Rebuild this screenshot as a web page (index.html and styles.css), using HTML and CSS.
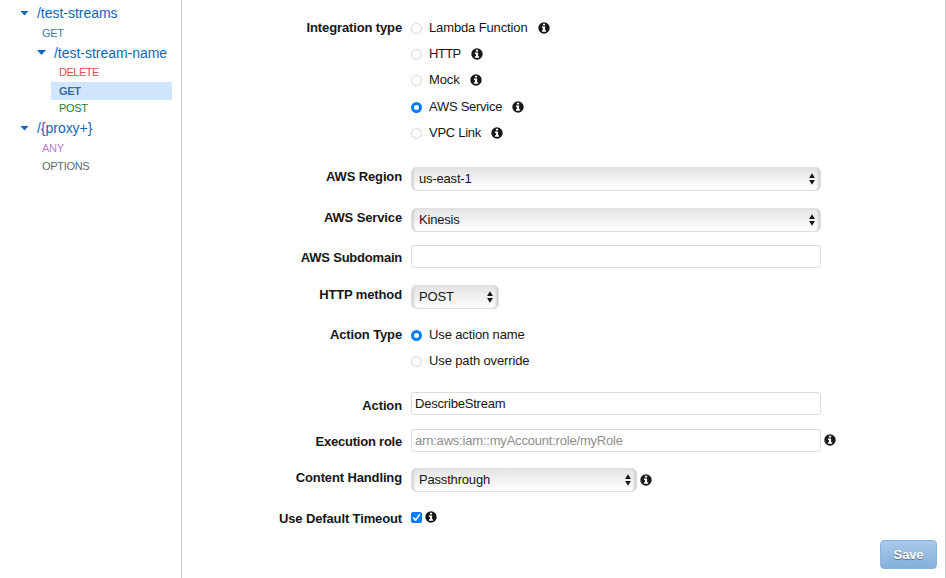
FILE: index.html
```
<!DOCTYPE html>
<html lang="en">
<head>
<meta charset="utf-8">
<title>Integration Request</title>
<link rel="stylesheet" href="styles.css">
</head>
<body>
<svg class="defs" width="0" height="0" aria-hidden="true">
  <symbol id="info" viewBox="0 0 12 12">
    <circle cx="6" cy="6" r="5.7" fill="#161616"/>
    <path d="M4.9 1.7h2.2v1.8H4.9zM3.9 4.6h3.2v3.7h1v1.4H3.9V8.3h1V6h-1z" fill="#fff"/>
  </symbol>
  <symbol id="updown" viewBox="0 0 6 12">
    <path d="M3 .2 5.9 5H.1zM3 11.8.1 7h5.8z" fill="#161616"/>
  </symbol>
</svg>
<div class="page">
  <nav class="sidebar">
    <div class="resource"><i class="caret"></i>/test-streams</div>
    <div class="method get">GET</div>
    <div class="resource nested"><i class="caret"></i>/test-stream-name</div>
    <div class="method deep delete">DELETE</div>
    <div class="method deep get selected">GET</div>
    <div class="method deep post">POST</div>
    <div class="resource"><i class="caret"></i>/{proxy+}</div>
    <div class="method any">ANY</div>
    <div class="method options">OPTIONS</div>
  </nav>
  <main class="content">
    <form class="form">
      <div class="row row-type">
        <span class="label">Integration type</span>
        <div class="choices">
          <label class="choice"><input type="radio" name="type"><span>Lambda Function</span><svg class="info"><use href="#info"/></svg></label>
          <label class="choice"><input type="radio" name="type"><span class="tight">HTTP</span><svg class="info"><use href="#info"/></svg></label>
          <label class="choice"><input type="radio" name="type"><span>Mock</span><svg class="info"><use href="#info"/></svg></label>
          <label class="choice"><input type="radio" name="type" checked><span class="snug">AWS Service</span><svg class="info"><use href="#info"/></svg></label>
          <label class="choice"><input type="radio" name="type"><span class="snug">VPC Link</span><svg class="info"><use href="#info"/></svg></label>
        </div>
      </div>
      <div class="row row-region">
        <span class="label">AWS Region</span>
        <div class="select wide"><span>us-east-1</span><svg class="updown"><use href="#updown"/></svg></div>
      </div>
      <div class="row row-service">
        <span class="label">AWS Service</span>
        <div class="select wide"><span>Kinesis</span><svg class="updown"><use href="#updown"/></svg></div>
      </div>
      <div class="row row-subdomain">
        <span class="label low">AWS Subdomain</span>
        <input class="text" type="text">
      </div>
      <div class="row row-method">
        <span class="label">HTTP method</span>
        <div class="select small"><span>POST</span><svg class="updown"><use href="#updown"/></svg></div>
      </div>
      <div class="row row-action-type">
        <span class="label">Action Type</span>
        <div class="choices">
          <label class="choice"><input type="radio" name="action" checked><span>Use action name</span></label>
          <label class="choice"><input type="radio" name="action"><span>Use path override</span></label>
        </div>
      </div>
      <div class="row row-action">
        <span class="label low">Action</span>
        <input class="text" type="text" value="DescribeStream">
      </div>
      <div class="row row-role">
        <span class="label low">Execution role</span>
        <div class="with-info"><input class="text" type="text" placeholder="arn:aws:iam::myAccount:role/myRole"><svg class="info"><use href="#info"/></svg></div>
      </div>
      <div class="row row-handling">
        <span class="label">Content Handling</span>
        <div class="with-info"><div class="select medium"><span>Passthrough</span><svg class="updown"><use href="#updown"/></svg></div><svg class="info"><use href="#info"/></svg></div>
      </div>
      <div class="row row-timeout">
        <span class="label">Use Default Timeout</span>
        <div class="check"><span class="box"><svg viewBox="0 0 11 11"><path d="M2.5 5.8 4.6 8.1 8.5 2.6" fill="none" stroke="#fff" stroke-width="1.6" stroke-linecap="round" stroke-linejoin="round"/></svg></span><svg class="info"><use href="#info"/></svg></div>
      </div>
    </form>
    <button class="save" type="button">Save</button>
  </main>
</div>
</body>
</html>
```
FILE: styles.css
```
* { box-sizing: border-box; }
body {
  margin: 0;
  background: #fff;
  color: #161616;
  font-family: "Liberation Sans", Arial, sans-serif;
  font-size: 13px;
}
.defs { display: none; }
.page { display: flex; width: 946px; height: 578px; overflow: hidden; }

.sidebar {
  width: 182px;
  flex: none;
  padding-top: 2px;
  border-right: 1px solid #ccc;
}
.resource {
  display: flex;
  align-items: center;
  height: 22px;
  padding-left: 20px;
  color: #1166bb;
  font-size: 14px;
  letter-spacing: -0.03px;
  white-space: nowrap;
}
.resource.nested { height: 21px; padding-left: 37px; }
.caret {
  width: 9px;
  height: 5px;
  margin-right: 8px;
  background: #1166bb;
  clip-path: polygon(0 0, 100% 0, 50% 100%);
}
.method {
  height: 18px;
  margin-left: 34px;
  padding-left: 8px;
  font-size: 11px;
  letter-spacing: -0.3px;
  line-height: 18px;
}
.deep { margin-left: 51px; }
.get { color: #4477aa; }
.delete { height: 19px; line-height: 19px; letter-spacing: -0.5px; color: #dd4f50; }
.selected { width: 121px; background: #d0e6ff; color: #3d6c9f; font-weight: bold; }
.post { height: 17px; line-height: 17px; color: #22812b; }
.any { color: #c07fd8; }
.options { color: #666; }

.content {
  display: flex;
  flex-direction: column;
  flex: 1;
  border-right: 1px solid #c8c8c8;
}
.form { padding-top: 15px; }
.row {
  display: grid;
  grid-template-columns: 220px max-content;
  column-gap: 9px;
  align-items: start;
}
.label {
  font-weight: bold;
  letter-spacing: -0.13px;
  line-height: 20px;
  text-align: right;
  white-space: nowrap;
}
.row-type { height: 152px; }
.row-type .label, .row-action-type .label { line-height: 26px; }
.row-region, .row-service { height: 41px; }
.row-subdomain { height: 40px; margin-top: -4px; }
.row-subdomain .label, .row-role .label { letter-spacing: -0.22px; }
.row-method { height: 37px; }
.row-action-type { height: 70px; }
.row-action { height: 37px; }
.row-role { height: 39px; }
.row-handling { height: 40px; }
.row-action .label, .row-timeout .label { position: relative; top: 1px; }
.low { padding-top: 3px; }

.choice {
  display: flex;
  align-items: center;
  height: 26.2px;
  letter-spacing: -0.13px;
}
.choice span { padding-bottom: 1px; }
.choice .snug { letter-spacing: -0.27px; }
.choice .tight { letter-spacing: -0.6px; }
.choice input {
  appearance: none;
  width: 11px;
  height: 11px;
  margin: 1px 7px 0 0;
  border: 1px solid #d4d4d4;
  border-radius: 50%;
  background: #fff;
}
.choice input:checked { border: 3.5px solid #087bff; }
.info { display: block; flex: none; width: 12px; height: 12px; }
.choice .info { margin-left: 10px; }

.select {
  display: flex;
  align-items: center;
  justify-content: space-between;
  height: 24px;
  padding: 0 5px 0 7px;
  border: 1px solid #e0e0e0;
  border-radius: 5px;
  background: linear-gradient(#e4e4e4, #fff);
  box-shadow: inset 3px 0 2px -1px #d6d6d6, inset -3px 0 2px -1px #d2d2d2;
  letter-spacing: -0.18px;
}
.select span { padding-bottom: 1px; }
.wide { width: 410px; }
.medium { width: 226px; }
.small { width: 88px; }
.updown { display: block; width: 6px; height: 12px; }
.text {
  width: 410px;
  height: 23px;
  padding: 0 3px 1px;
  border: 1px solid #ddd;
  border-radius: 3px;
  background: #fff;
  color: #161616;
  font: inherit;
  letter-spacing: -0.2px;
}
.text::placeholder { color: #8e8e8e; opacity: 1; }
.with-info { display: flex; align-items: center; gap: 3px; }
.with-info .text + .info { margin-top: -2px; }
.check { display: flex; align-items: center; gap: 3px; height: 18px; }
.box { width: 11px; height: 11px; border-radius: 2px; background: #087bff; }
.box svg { display: block; }

.save {
  align-self: flex-end;
  width: 57px;
  height: 29px;
  margin: auto 8px 9px 0;
  padding: 0;
  border: 1px solid #8db3dc;
  border-radius: 4px;
  background: linear-gradient(#a9c9e9, #85b0dc);
  color: #fff;
  font: bold 13px "Liberation Sans", Arial, sans-serif;
  letter-spacing: -0.15px;
  text-shadow: 0 1px 1px #567;
}
```
